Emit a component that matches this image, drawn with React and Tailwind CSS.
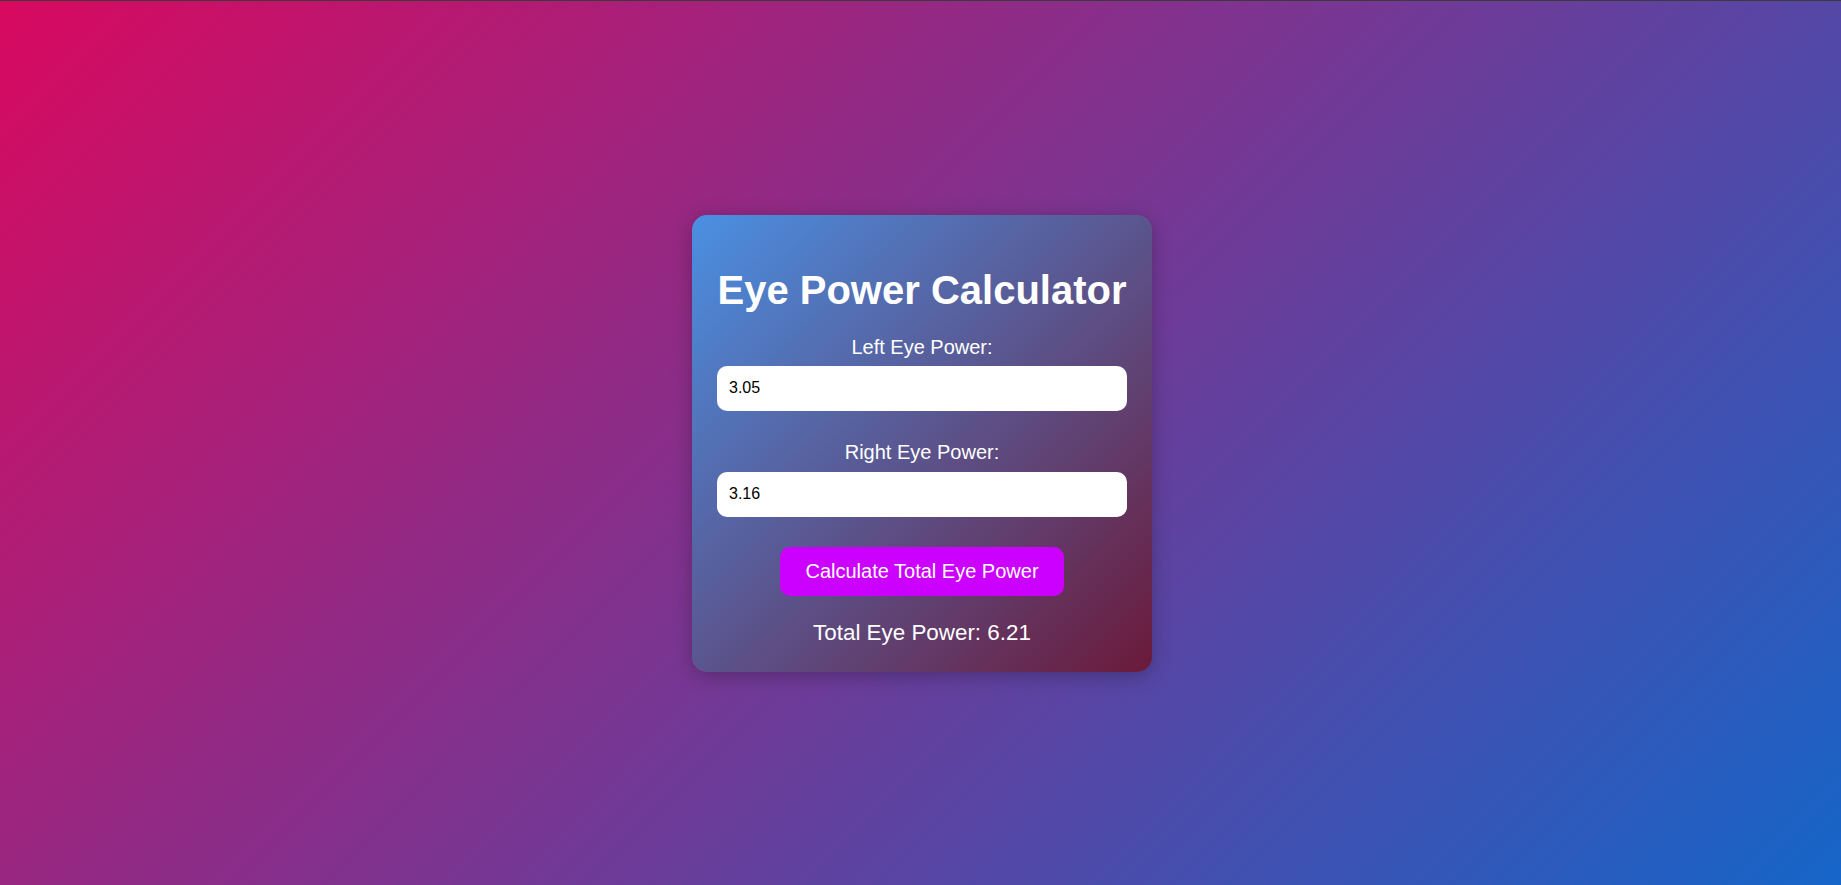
import React, { useState } from 'react';

const App = () => {
    const [left, setLeft] = useState('3.05');
    const [right, setRight] = useState('3.16');
    const [total, setTotal] = useState('6.21');

    const calculate = () => {
        const sum = (parseFloat(left) || 0) + (parseFloat(right) || 0);
        setTotal(sum.toFixed(2));
    };

    return (
        <div className="min-h-screen h-[885px] border-t border-[#3b3b3b] bg-[linear-gradient(135deg,#d8095f,#1565c8)] flex items-center justify-center pl-[3px] font-['Liberation_Sans',Arial,sans-serif] text-white">
            {/* Card */}
            <div className="w-[460px] rounded-[15px] bg-[linear-gradient(135deg,#4a90e2,#6b1a3a)] shadow-[0_4px_20px_rgba(0,0,0,0.25)] px-[25px] pt-[52px] pb-[27px] flex flex-col items-center text-center">
                <h2 className="text-[40px] leading-[46px] font-bold">Eye Power Calculator</h2>

                <label htmlFor="left" className="mt-[23px] text-[20px] leading-[23px]">Left Eye Power:</label>
                <input
                    id="left"
                    type="text"
                    value={left}
                    onChange={(e) => setLeft(e.target.value)}
                    className="mt-[7px] w-full h-[45px] rounded-[10px] bg-white text-black text-[16px] pl-3 outline-none"
                />

                <label htmlFor="right" className="mt-[30px] text-[20px] leading-[23px]">Right Eye Power:</label>
                <input
                    id="right"
                    type="text"
                    value={right}
                    onChange={(e) => setRight(e.target.value)}
                    className="mt-[8px] w-full h-[45px] rounded-[10px] bg-white text-black text-[16px] pl-3 outline-none"
                />

                <button
                    onClick={calculate}
                    className="mt-[30px] w-[284px] h-[49px] rounded-[10px] bg-[#cc00ff] text-white text-[20px] leading-[23px]"
                >
                    Calculate Total Eye Power
                </button>

                <p className="mt-[24px] text-[22.4px] leading-[25px]">Total Eye Power: {total}</p>
            </div>
        </div>
    );
};

export default App;
